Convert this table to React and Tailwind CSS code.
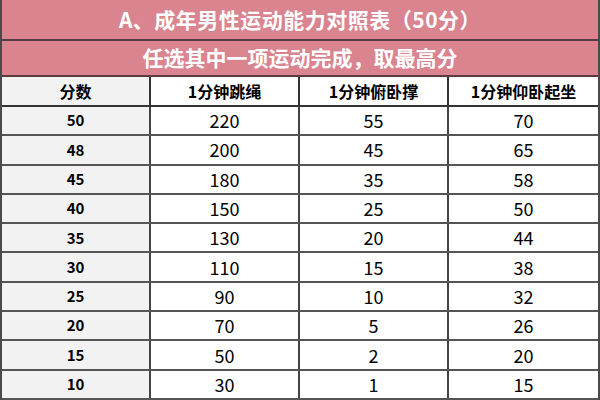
import React from 'react';

const rows = [
  ['50', '220', '55', '70'],
  ['48', '200', '45', '65'],
  ['45', '180', '35', '58'],
  ['40', '150', '25', '50'],
  ['35', '130', '20', '44'],
  ['30', '110', '15', '38'],
  ['25', '90', '10', '32'],
  ['20', '70', '5', '26'],
  ['15', '50', '2', '20'],
  ['10', '30', '1', '15'],
];

const headers = ['分数', '1分钟跳绳', '1分钟俯卧撑', '1分钟仰卧起坐'];

export default function App() {
  return (
    <div
      className="w-[600px] h-[400px] overflow-hidden bg-white border-l-2 border-r-2 border-[#4a4a4a]"
      style={{ fontFamily: '"Noto Sans CJK SC", "Noto Sans", sans-serif' }}
    >
      <div className="h-[41px] bg-[#d9848f] border-b-2 border-[#5a3b40] flex items-center justify-center text-white font-bold text-[21px] tracking-[0.5px]">
        A、成年男性运动能力对照表（50分）
      </div>
      <div className="h-[36px] bg-[#d9848f] border-b-2 border-[#5a3b40] flex items-center justify-center text-white font-bold text-[21px]">
        任选其中一项运动完成，取最高分
      </div>
      <div className="grid grid-cols-4 h-[30px] border-b-2 border-[#333]">
        {headers.map((h, i) => (
          <div
            key={i}
            className={`flex items-center justify-center font-bold text-[16px] text-black ${i === 0 ? 'bg-[#f2f2f2]' : 'bg-white'} ${i < 3 ? 'border-r-2 border-[#333]' : ''}`}
          >
            {h}
          </div>
        ))}
      </div>
      {rows.map((r, ri) => (
        <div key={ri} className="grid grid-cols-4 h-[29.3px] border-b-2 border-[#555]">
          {r.map((c, ci) => (
            <div
              key={ci}
              className={`flex items-center justify-center text-black ${ci === 0 ? 'bg-[#f2f2f2] font-bold text-[15px]' : 'bg-white text-[18px]'} ${ci < 3 ? 'border-r-2 border-[#444]' : ''}`}
            >
              {c}
            </div>
          ))}
        </div>
      ))}
    </div>
  );
}
